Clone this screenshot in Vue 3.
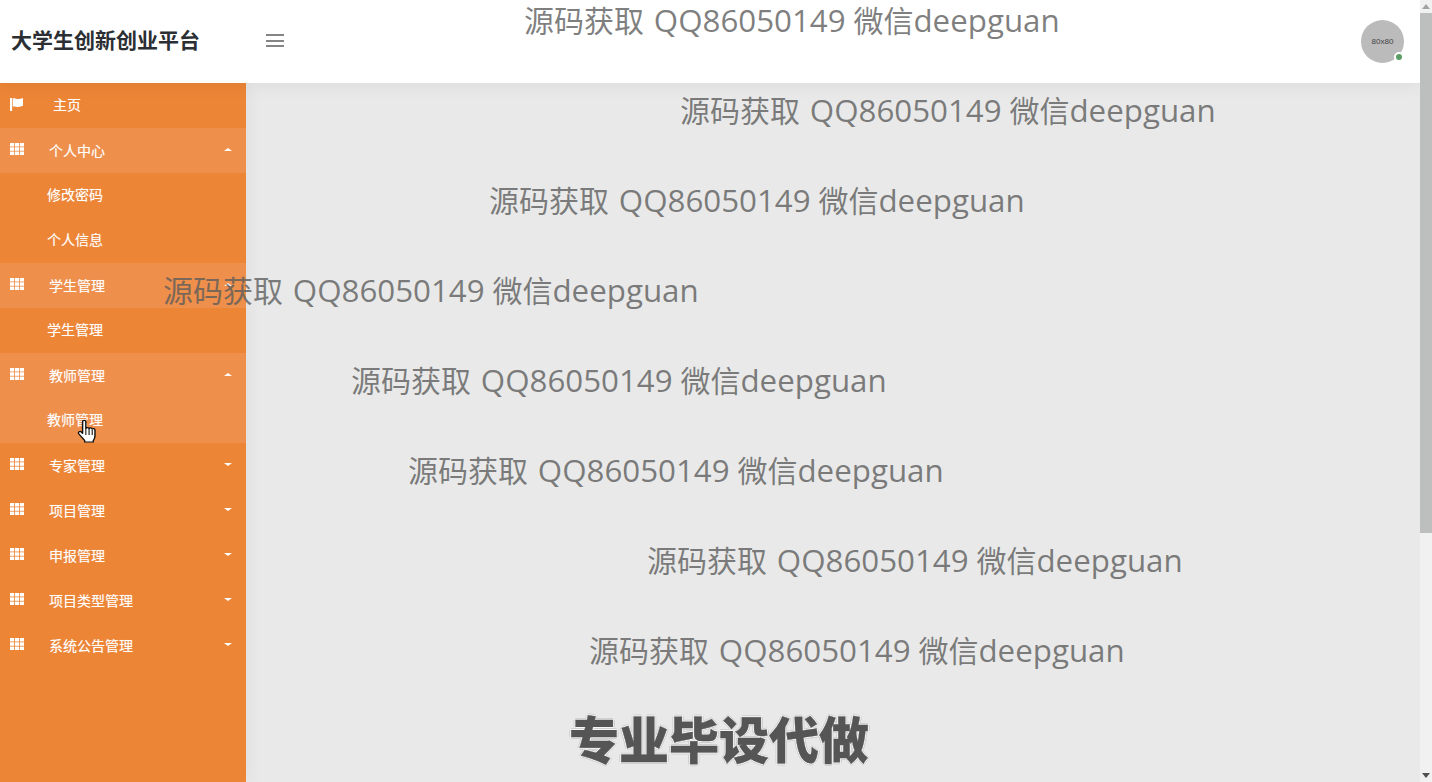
<template>
  <div class="page">
    <div class="main">
      <header class="topbar">
        <div class="brand">大学生创新创业平台</div>
        <button class="burger"><span></span><span></span><span></span></button>
        <div class="avatar">
          <span class="avatar-label">80x80</span>
          <i class="online"></i>
        </div>
      </header>

      <div class="body">
        <aside class="sidebar">
          <template v-for="item in menu" :key="item.label + item.kind">
            <div class="row" :class="[item.kind, { hl: item.hl }]">
              <svg v-if="item.kind === 'home'" class="ico flag" viewBox="0 0 14 14">
                <path d="M0 0h2.300v14H0zM3 .6c2.200-.9 3.900.7 5.800.6 1.900-.1 3.500-.5 5.200-1.200v8.400c-1.700.8-3.300 1.200-5.200 1.300-2 .1-3.600-1.100-5.800-.5z" fill="#fff" />
              </svg>
              <svg v-else-if="item.kind === 'group'" class="ico" viewBox="0 0 14 12">
                <g fill="#fff">
                  <template v-for="y in [0, 4.300, 8.600]" :key="y">
                    <rect v-for="x in [0, 5, 10]" :key="x" :x="x" :y="y" width="4.200" height="3.500" />
                  </template>
                </g>
              </svg>
              <span class="label">{{ item.label }}</span>
              <i v-if="item.arrow" class="caret" :class="item.arrow"></i>
            </div>
          </template>
        </aside>
        <main class="content"></main>
      </div>
    </div>

    <div class="scrollbar">
      <div class="sb-btn"><i class="sb-up"></i></div>
      <div class="sb-thumb"></div>
      <div class="sb-track"></div>
      <div class="sb-btn"><i class="sb-down"></i></div>
    </div>

    <div class="marks">
      <div v-for="(x, i) in marks" :key="i" class="mark" :style="{ marginLeft: x + 'px' }">
        <span>源码获取</span> <span class="latin qq">QQ86050149</span> <span>微信</span><span class="latin">deepguan</span>
      </div>
      <div class="promo">专业毕设代做</div>
    </div>

    <svg class="cursor" width="24" height="26" viewBox="0 0 20 26" preserveAspectRatio="none">
      <path d="M5.500 2.500c0-1.600 2.700-1.600 2.700 0v7c.4-1.300 2.500-1.200 2.700.2.500-1.100 2.400-1 2.600.4.600-.9 2.300-.6 2.300 1v5.900c0 2.200-.8 3.400-1.400 4.500v1.500H7.200v-1.500c-1-1.600-3.600-4.700-4.900-6.800-1-1.700 1-2.900 2.100-1.700l1.100 1.300z" fill="#fff" stroke="#111" stroke-width="1.200" stroke-linejoin="round" />
      <path d="M8.200 10v6M10.900 10v6M13.500 11v5" stroke="#111" stroke-width=".9" fill="none" />
    </svg>
  </div>
</template>

<script setup>
const menu = [
  { label: '主页', kind: 'home' },
  { label: '个人中心', kind: 'group', arrow: 'up', hl: true },
  { label: '修改密码', kind: 'sub' },
  { label: '个人信息', kind: 'sub' },
  { label: '学生管理', kind: 'group', arrow: 'up', hl: true },
  { label: '学生管理', kind: 'sub' },
  { label: '教师管理', kind: 'group', arrow: 'up', hl: true },
  { label: '教师管理', kind: 'sub', hl: true },
  { label: '专家管理', kind: 'group', arrow: 'down' },
  { label: '项目管理', kind: 'group', arrow: 'down' },
  { label: '申报管理', kind: 'group', arrow: 'down' },
  { label: '项目类型管理', kind: 'group', arrow: 'down' },
  { label: '系统公告管理', kind: 'group', arrow: 'down' }
]

const marks = [524, 680, 489, 163, 351, 408, 647, 589]
</script>

<style>
html, body {
  margin: 0;
  height: 100%;
  overflow: hidden;
}
</style>

<style scoped>
.page {
  position: relative;
  display: flex;
  width: 1432px;
  height: 782px;
  overflow: hidden;
  font-family: "Open Sans", "Noto Sans CJK SC", sans-serif;
  background: #e8e9e8;
}

.main {
  flex: 1;
  display: flex;
  flex-direction: column;
  min-width: 0;
}

.topbar {
  position: relative;
  z-index: 2;
  display: flex;
  align-items: center;
  height: 83px;
  flex-shrink: 0;
  padding: 0 16px 0 11px;
  background: #fff;
  box-shadow: 0 2px 18px rgba(0, 0, 0, 0.06);
  box-sizing: border-box;
}

.brand {
  width: 255px;
  padding-bottom: 4px;
  font-size: 21px;
  line-height: 28px;
  font-weight: 700;
  color: #2b2f33;
}

.burger {
  display: flex;
  flex-direction: column;
  gap: 3.500px;
  width: 18px;
  margin-bottom: 2px;
  padding: 0;
  border: 0;
  background: none;
}

.burger span {
  display: block;
  height: 2px;
  background: #858585;
}

.avatar {
  position: relative;
  display: flex;
  align-items: center;
  justify-content: center;
  width: 43px;
  height: 43px;
  margin-left: auto;
  border-radius: 50%;
  background: #bbb;
}

.avatar-label {
  font-size: 8px;
  color: #444;
  font-family: "Liberation Sans", sans-serif;
}

.online {
  position: absolute;
  right: 0;
  bottom: 1px;
  width: 6px;
  height: 6px;
  border: 2px solid #fff;
  border-radius: 50%;
  background: #5a9e63;
}

.body {
  flex: 1;
  display: flex;
  min-height: 0;
}

.sidebar {
  position: relative;
  width: 246px;
  flex-shrink: 0;
  background: #ec8536;
  box-shadow: 4px 0 14px rgba(0, 0, 0, 0.04);
}

.content {
  flex: 1;
}

.row {
  display: flex;
  align-items: center;
  height: 45px;
  padding: 0 14px 0 10px;
  box-sizing: border-box;
  font-size: 14px;
  color: #fff;
  text-shadow: 0 0 1px rgba(255, 255, 255, 0.4);
}

.row.hl {
  background: #ee8f4b;
}

.label {
  padding-bottom: 3px;
}

.row.home .label {
  margin-left: 29px;
}

.row.group .label {
  margin-left: 25px;
  padding-bottom: 2px;
}

.row.sub {
  padding-left: 47px;
}

.ico {
  width: 14px;
  height: 12px;
  flex-shrink: 0;
  margin-top: -3px;
}

.ico.flag {
  width: 13px;
  height: 13px;
  margin-right: 1px;
  margin-top: -3px;
}

.caret {
  width: 0;
  height: 0;
  margin-left: auto;
  margin-top: -2px;
  border-left: 4px solid transparent;
  border-right: 4px solid transparent;
}

.caret.up {
  border-bottom: 3px solid #fff;
}

.caret.down {
  border-top: 3px solid #fff;
}

.scrollbar {
  position: relative;
  z-index: 3;
  display: flex;
  flex-direction: column;
  width: 12px;
  flex-shrink: 0;
  background: #f0f1f0;
}

.sb-btn {
  display: flex;
  align-items: center;
  justify-content: center;
  height: 13px;
}

.sb-up,
.sb-down {
  width: 0;
  height: 0;
  border-left: 4px solid transparent;
  border-right: 4px solid transparent;
}

.sb-up {
  border-bottom: 5px solid #a3a3a3;
}

.sb-down {
  border-top: 5px solid #505050;
}

.sb-thumb {
  height: 520px;
  background: #bcbfbd;
}

.sb-track {
  flex: 1;
}

.marks {
  position: absolute;
  z-index: 5;
  top: -1px;
  left: 0;
  pointer-events: none;
}

.mark {
  height: 90px;
  line-height: 42px;
  font-size: 30px;
  white-space: nowrap;
  color: rgba(92, 92, 92, 0.78);
}

.latin {
  font-size: 31.300px;
}

.qq {
  margin-left: 2px;
}

.promo {
  margin: -9px 0 0 569px;
  font-size: 50px;
  line-height: 60px;
  font-weight: 900;
  white-space: nowrap;
  color: #555;
  -webkit-text-stroke: 0.3px #555;
  text-shadow: 1px 0 #f6f6f6, -1px 0 #f6f6f6, 0 1px #f6f6f6, 0 -1px #f6f6f6, 2px 0 #cfcfcf, -2px 0 #cfcfcf, 0 2px #cfcfcf, 0 -2px #cfcfcf;
}

.cursor {
  position: absolute;
  z-index: 6;
  left: 76px;
  top: 419px;
}
</style>
